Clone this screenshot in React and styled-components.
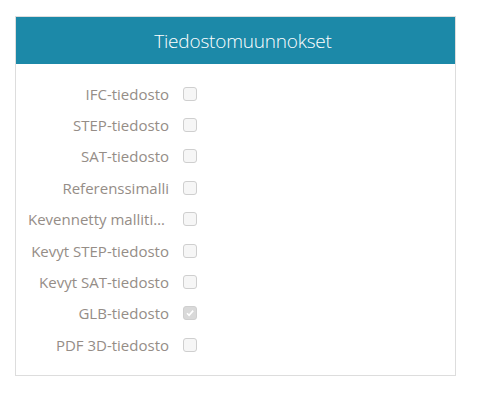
import React from "react";
import styled, { createGlobalStyle } from "styled-components";

const Global = createGlobalStyle`
  html, body { margin: 0; padding: 0; background: #fff; }
  body { font-family: "Open Sans", "Noto Sans", sans-serif; }
`;

const Page = styled.div`
  padding: 16px 29px 0 15px;
`;

const Panel = styled.section`
  width: 439px;
  border: 1px solid #dddddd;
  background: #fff;
`;

const Header = styled.header`
  height: 47px;
  padding-left: 15px;
  background: #1c89a8;
  color: #fff;
  display: flex;
  align-items: center;
  justify-content: center;
  font-size: 19px;
  font-weight: 300;
  letter-spacing: -0.2px;
`;

const Body = styled.div`
  padding: 14px 0 14px 12px;
  display: flex;
  flex-direction: column;
`;

const Row = styled.label`
  display: grid;
  grid-template-columns: 141px 14px;
  column-gap: 14px;
  align-items: center;
  height: 31.4px;
`;

const LabelText = styled.span`
  text-align: right;
  font-size: 15px;
  color: #958d87;
  white-space: nowrap;
  overflow: hidden;
  text-overflow: ellipsis;
`;

const Box = styled.span`
  width: 14px;
  height: 14px;
  box-sizing: border-box;
  border: 1px solid #cfcfcf;
  border-radius: 3px;
  background: ${(p) => (p.checked ? "#d9d9d9" : "#f6f6f6")};
  display: flex;
  align-items: center;
  justify-content: center;
`;

const items = [
  ["IFC-tiedosto", false],
  ["STEP-tiedosto", false],
  ["SAT-tiedosto", false],
  ["Referenssimalli", false],
  ["Kevennetty mallitiedosto", false],
  ["Kevyt STEP-tiedosto", false],
  ["Kevyt SAT-tiedosto", false],
  ["GLB-tiedosto", true],
  ["PDF 3D-tiedosto", false],
];

export default function App() {
  return (
    <>
      <Global />
      <Page>
        <Panel>
          <Header>Tiedostomuunnokset</Header>
          <Body>
            {items.map(([t, c]) => (
              <Row key={t}>
                <LabelText>{t}</LabelText>
                <Box checked={c}>
                  {c && (
                    <svg width="10" height="10" viewBox="0 0 10 10">
                      <path d="M2 5.2 L4.1 7.3 L8.2 2.6" fill="none" stroke="#fff" strokeWidth="1.6" />
                    </svg>
                  )}
                </Box>
              </Row>
            ))}
          </Body>
        </Panel>
      </Page>
    </>
  );
}
